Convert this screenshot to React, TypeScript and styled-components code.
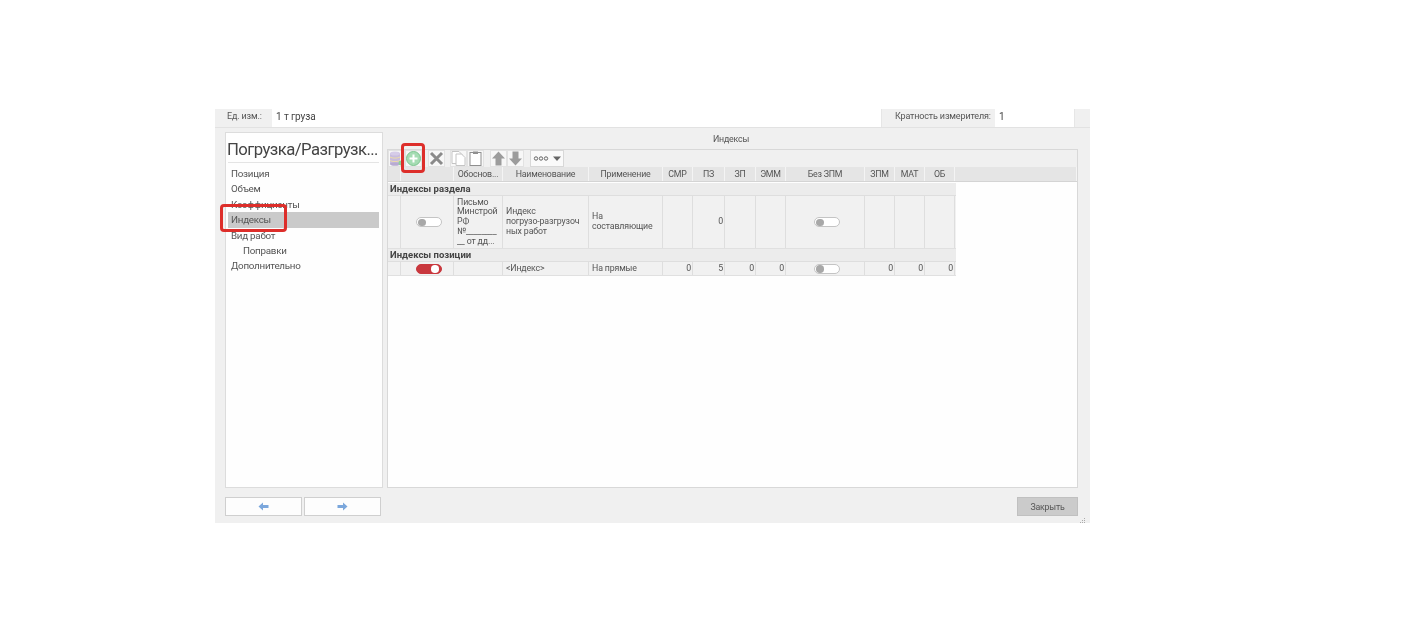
import React from "react";
import styled, { createGlobalStyle } from "styled-components";

const Global = createGlobalStyle`
  html, body { margin: 0; padding: 0; background: #fff; }
  body { font-family: Roboto, "Noto Sans", "Liberation Sans", sans-serif; color: #444; }
  * { box-sizing: border-box; }
`;

const Page = styled.div`
  width: 1422px;
  height: 634px;
  padding: 109px 0 0 215px;
  overflow: hidden;
`;
const Win = styled.div`
  position: relative;
  width: 875px;
  height: 414px;
  background: #f0f0f0;
  display: flex;
  flex-direction: column;
  filter: blur(0.4px);
`;
const TopBar = styled.div`
  height: 19px;
  display: flex;
  padding-right: 15px;
  border-bottom: 1px solid #e2e2e2;
  line-height: 15px;
`;
const TopLabel = styled.div<{ $w: number }>`
  width: ${(p) => p.$w}px;
  flex: none;
  color: #555;
  white-space: nowrap;
  padding-left: ${(p) => (p.$w > 100 ? 13 : 12)}px;
  font-size: 9px;
  letter-spacing: -0.15px;
`;
const TopValue = styled.div<{ $grow?: boolean }>`
  background: #fff;
  color: #444;
  padding-left: 4px;
  font-size: 10px;
  letter-spacing: -0.1px;
  height: 18px;
  border-right: 1px solid #e6e6e6;
  ${(p) => (p.$grow ? "flex: 1;" : "width: 80px;")}
`;
const Body = styled.div`
  display: flex;
  padding: 4px 12px 0 10px;
  gap: 4px;
  height: 360px;
`;
const Side = styled.div`
  width: 158px;
  flex: none;
  background: #fefefe;
  border: 1px solid #dcdcdc;
  padding: 6px 3px 0 2px;
`;
const SideTitle = styled.div`
  font-size: 16.7px;
  letter-spacing: -0.55px;
  line-height: 22px;
  height: 24px;
  color: #444;
  white-space: nowrap;
  border-bottom: 1px solid #e4e4e4;
  margin-bottom: 3px;
  text-indent: -1px;
`;
const NavItem = styled.div<{ $active?: boolean; $sub?: boolean }>`
  height: 15.4px;
  font-size: 9.8px;
  letter-spacing: -0.25px;
  line-height: 15px;
  padding-left: ${(p) => (p.$sub ? 15 : 3)}px;
  background: ${(p) => (p.$active ? "#cacaca" : "transparent")};
  color: #555;
  white-space: nowrap;
`;
const Main = styled.div`
  flex: 1;
  display: flex;
  flex-direction: column;
  min-width: 0;
`;
const MainTitle = styled.div`
  height: 13px;
  text-align: center;
  font-size: 8.8px;
  letter-spacing: -0.2px;
  line-height: 14px;
  color: #555;
  padding-right: 3px;
`;
const Panel = styled.div`
  flex: 1;
  margin-top: 4px;
  background: #fefefe;
  border: 1px solid #d8d8d8;
  display: flex;
  flex-direction: column;
`;
const Toolbar = styled.div`
  height: 17px;
  background: #f0f0f0;
  display: flex;
  align-items: flex-start;
`;
const ToolBtn = styled.div`
  width: 17px;
  height: 17px;
  background: #f7f7f7;
  border: 1px solid #e2e2e2;
  display: flex;
  align-items: center;
  justify-content: center;
  flex: none;
`;
const ToolGap = styled.div<{ $w: number }>`
  width: ${(p) => p.$w}px;
  flex: none;
`;
const Drop = styled.div`
  width: 34px;
  height: 17px;
  background: #fafafa;
  border: 1px solid #d8d8d8;
  display: flex;
  align-items: center;
  justify-content: center;
  flex: none;
`;
const Columns = "13px 53px 49px 86px 74px 30px 32px 31px 30px 79px 30px 30px 30px";
const HeadRow = styled.div`
  display: grid;
  grid-template-columns: ${Columns} 1fr;
  height: 15px;
  background: #e5e5e5;
  border-bottom: 1px solid #d4d4d4;
`;
const Head = styled.div`
  font-size: 8.8px;
  letter-spacing: -0.2px;
  line-height: 15px;
  text-align: center;
  color: #555;
  border-right: 1px solid #f4f4f4;
  white-space: nowrap;
  overflow: hidden;
`;
const SectionRow = styled.div<{ $top: number }>`
  width: 568px;
  height: 13px;
  margin-top: ${(p) => p.$top}px;
  background: #ececec;
  border-bottom: 1px solid #dedede;
  padding-left: 2px;
  font-size: 9.5px;
  font-weight: 700;
  line-height: 12px;
  color: #444;
`;
const DataRow = styled.div<{ $h: number }>`
  display: grid;
  width: 568px;
  grid-template-columns: ${Columns};
  height: ${(p) => p.$h}px;
  background: #f1f1f1;
  border-bottom: 1px solid #e0e0e0;
`;
const Cell = styled.div<{ $right?: boolean; $center?: boolean }>`
  border-right: 1px solid #dedede;
  font-size: 8.8px;
  letter-spacing: -0.15px;
  line-height: 9.8px;
  color: #555;
  padding: 0 ${(p) => (p.$right ? 1 : p.$center ? 0 : 3)}px 0 3px;
  display: flex;
  align-items: center;
  justify-content: ${(p) => (p.$right ? "flex-end" : p.$center ? "center" : "flex-start")};
  overflow: hidden;
`;
const CellText = styled.span`
  display: block;
  white-space: nowrap;
`;
const Toggle = styled.div<{ $on?: boolean }>`
  position: relative;
  width: 26px;
  height: 10px;
  border-radius: 5px;
  background: ${(p) => (p.$on ? "#c9383e" : "#fff")};
  border: 1px solid ${(p) => (p.$on ? "#c9383e" : "#c4c4c4")};
  &::after {
    content: "";
    position: absolute;
    top: 0.5px;
    ${(p) => (p.$on ? "right: 2px; background: #fff;" : "left: 1.5px; background: #a8a8a8;")}
    width: 7.5px;
    height: 7.5px;
    border-radius: 50%;
  }
`;
const Footer = styled.div`
  flex: 1;
  display: flex;
  align-items: flex-start;
  padding: 9px 12px 0 10px;
  gap: 2px;
`;
const NavBtn = styled.div`
  width: 77px;
  height: 19px;
  background: #fdfdfd;
  border: 1px solid #cfcfcf;
  display: flex;
  align-items: center;
  justify-content: center;
`;
const Close = styled.div`
  margin-left: auto;
  width: 61px;
  height: 19px;
  background: #cbcbcb;
  border: 1px solid #c0c0c0;
  font-size: 8.8px;
  letter-spacing: -0.2px;
  line-height: 18px;
  text-align: center;
  color: #555;
`;
const Callout = styled.div<{ $x: number; $y: number; $w: number; $h: number }>`
  position: absolute;
  left: ${(p) => p.$x}px;
  top: ${(p) => p.$y}px;
  width: ${(p) => p.$w}px;
  height: ${(p) => p.$h}px;
  border: 3px solid #dd2e2a;
  border-radius: 4px;
`;
const Grip = styled.svg`
  position: absolute;
  right: 4px;
  bottom: 0;
`;

const Arrow = ({ up }: { up?: boolean }) => (
  <svg width="15" height="15" viewBox="0 0 15 15" style={{ transform: up ? "none" : "rotate(180deg)" }}>
    <path d="M7.5 0.5 14 7.5H10.500V14.500H4.500V7.500H1Z" fill="#9c9c9c" />
  </svg>
);
const Doc = ({ clip }: { clip?: boolean }) => (
  <svg width="15" height="15" viewBox="0 0 15 15">
    {clip ? (
      <>
        <rect x="2" y="1.500" width="11" height="13" fill="#fff" stroke="#8f8f8f" />
        <rect x="5" y="0.500" width="5" height="2.500" fill="#8f8f8f" />
      </>
    ) : (
      <>
        <path d="M1 .5H8L11 3.500V12.500H1Z" fill="#fff" stroke="#c4c4c4" />
        <path d="M5 3H10.500L14 6.500V14.500H5Z" fill="#fff" stroke="#c4c4c4" />
      </>
    )}
  </svg>
);
const BlueArrow = ({ left }: { left?: boolean }) => (
  <svg width="11" height="9" viewBox="0 0 11 9" style={{ transform: left ? "rotate(180deg)" : "none" }}>
    <path d="M0.5 3H6V0.5L10.500 4.500 6 8.500V6H0.5Z" fill="#7ba7dc" />
  </svg>
);

const zeros = (vals: string[]) => vals.map((v, i) => <Cell key={i} $right>{v}</Cell>);

export default function App() {
  return (
    <Page>
      <Global />
      <Win>
        <TopBar>
          <TopLabel $w={57}>Ед. изм.:</TopLabel>
          <TopValue $grow>1 т груза</TopValue>
          <TopLabel $w={113}>Кратность измерителя:</TopLabel>
          <TopValue>1</TopValue>
        </TopBar>
        <Body>
          <Side>
            <SideTitle>Погрузка/Разгрузк...</SideTitle>
            <NavItem>Позиция</NavItem>
            <NavItem>Объем</NavItem>
            <NavItem>Коэффициенты</NavItem>
            <NavItem $active>Индексы</NavItem>
            <NavItem>Вид работ</NavItem>
            <NavItem $sub>Поправки</NavItem>
            <NavItem>Дополнительно</NavItem>
          </Side>
          <Main>
            <MainTitle>Индексы</MainTitle>
            <Panel>
              <Toolbar>
                <ToolBtn>
                  <svg width="15" height="15" viewBox="0 0 15 15">
                    <rect x="1" y="2" width="10" height="11" fill="#c8bcdf" />
                    <ellipse cx="6" cy="2.500" rx="5" ry="2" fill="#d6cce8" />
                    <ellipse cx="6" cy="13" rx="5" ry="1.800" fill="#b8abd2" />
                    <path d="M1 6c2 1.500 8 1.500 10 0M1 9.500c2 1.500 8 1.500 10 0" stroke="#ecdca8" fill="none" />
                    <circle cx="12" cy="12" r="2.500" fill="#8fd19a" />
                  </svg>
                </ToolBtn>
                <ToolBtn>
                  <svg width="15" height="15" viewBox="0 0 15 15">
                    <circle cx="7.500" cy="7.500" r="7" fill="#a5dcb3" stroke="#7cc48f" />
                    <path d="M7.500 3.500v8M3.500 7.500h8" stroke="#fff" strokeWidth="2" />
                  </svg>
                </ToolBtn>
                <ToolGap $w={6} />
                <ToolBtn>
                  <svg width="15" height="15" viewBox="0 0 15 15">
                    <path d="M2 2 13 13M13 2 2 13" stroke="#8a8a8a" strokeWidth="3" />
                  </svg>
                </ToolBtn>
                <ToolGap $w={5} />
                <ToolBtn><Doc /></ToolBtn>
                <ToolBtn><Doc clip /></ToolBtn>
                <ToolGap $w={6} />
                <ToolBtn><Arrow up /></ToolBtn>
                <ToolBtn><Arrow /></ToolBtn>
                <ToolGap $w={6} />
                <Drop>
                  <svg width="28" height="9" viewBox="0 0 28 9">
                    <circle cx="3" cy="4.500" r="1.700" fill="none" stroke="#666" />
                    <circle cx="8" cy="4.500" r="1.700" fill="none" stroke="#666" />
                    <circle cx="13" cy="4.500" r="1.700" fill="none" stroke="#666" />
                    <path d="M20 2.500h8L24 7Z" fill="#666" />
                  </svg>
                </Drop>
              </Toolbar>
              <HeadRow>
                <Head />
                <Head />
                <Head>Обоснов...</Head>
                <Head>Наименование</Head>
                <Head>Применение</Head>
                <Head>СМР</Head>
                <Head>ПЗ</Head>
                <Head>ЗП</Head>
                <Head>ЭММ</Head>
                <Head>Без ЗПМ</Head>
                <Head>ЗПМ</Head>
                <Head>МАТ</Head>
                <Head>ОБ</Head>
                <Head />
              </HeadRow>
              <SectionRow $top={1}>Индексы раздела</SectionRow>
              <DataRow $h={53}>
                <Cell />
                <Cell $center><Toggle /></Cell>
                <Cell><CellText>Письмо<br />Минстрой<br />РФ<br />№________<br />__ от дд...</CellText></Cell>
                <Cell><CellText>Индекс<br />погрузо-разгрузоч<br />ных работ</CellText></Cell>
                <Cell><CellText>На<br />составляющие</CellText></Cell>
                <Cell />
                <Cell $right>0</Cell>
                <Cell />
                <Cell />
                <Cell $center><Toggle /></Cell>
                <Cell />
                <Cell />
                <Cell />
              </DataRow>
              <SectionRow $top={0}>Индексы позиции</SectionRow>
              <DataRow $h={14}>
                <Cell />
                <Cell $center><Toggle $on /></Cell>
                <Cell />
                <Cell>&lt;Индекс&gt;</Cell>
                <Cell>На прямые</Cell>
                {zeros(["0", "5", "0", "0"])}
                <Cell $center><Toggle /></Cell>
                {zeros(["0", "0", "0"])}
              </DataRow>
            </Panel>
          </Main>
        </Body>
        <Footer>
          <NavBtn><BlueArrow left /></NavBtn>
          <NavBtn><BlueArrow /></NavBtn>
          <Close>Закрыть</Close>
        </Footer>
        <Callout $x={5} $y={95} $w={67} $h={28} />
        <Callout $x={186} $y={34} $w={24} $h={30} />
        <Grip width="8" height="6" viewBox="0 0 8 6">
          <path d="M6 1h1v1H6zM4 3h1v1H4zM6 3h1v1H6zM2 5h1v1H2zM4 5h1v1H4zM6 5h1v1H6z" fill="#aaa" />
        </Grip>
      </Win>
    </Page>
  );
}
